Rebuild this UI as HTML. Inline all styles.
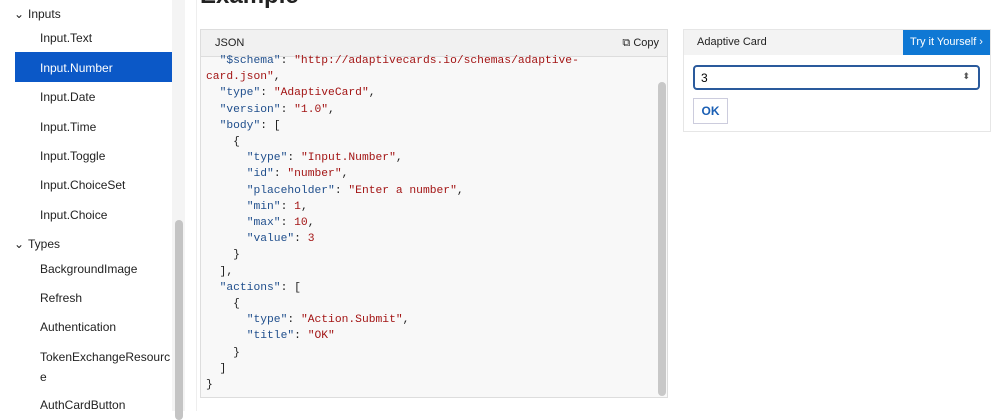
<!DOCTYPE html><html><head><style>
body{margin:0;width:1000px;height:411px;overflow:hidden;background:#fff;font-family:"Liberation Sans",sans-serif;position:relative}
.a{position:absolute}
.nav{font-size:12px;color:#222}
.nav div{position:absolute;left:40px}
pre{margin:0;font-family:"Liberation Mono",monospace;font-size:11.3px;line-height:16.2px;color:#222}
.k{color:#1f4e8c}.s{color:#a31515}
</style></head><body>
<div class="a" style="left:172px;top:0;width:13px;height:411px;background:#f4f4f4"></div>
<div class="a" style="left:175px;top:220px;width:8px;height:200px;background:#c4c4c4;border-radius:4px"></div>
<div class="a" style="left:196px;top:0;width:1px;height:411px;background:#eee"></div>
<div class="nav">
<div style="left:14px;top:7px">⌄</div>
<div style="left:28px;top:7px">Inputs</div>
<div style="top:31px">Input.Text</div>
<div class="a" style="left:15px;top:52px;width:157px;height:30px;background:#0b58c7"></div>
<div style="top:61px;color:#fff">Input.Number</div>
<div style="top:90px">Input.Date</div>
<div style="top:120px">Input.Time</div>
<div style="top:149px">Input.Toggle</div>
<div style="top:178px">Input.ChoiceSet</div>
<div style="top:208px">Input.Choice</div>
<div style="left:14px;top:237px">⌄</div>
<div style="left:28px;top:237px">Types</div>
<div style="top:262px">BackgroundImage</div>
<div style="top:291px">Refresh</div>
<div style="top:320px">Authentication</div>
<div style="top:350px">TokenExchangeResourc</div>
<div style="top:370px">e</div>
<div style="top:398px">AuthCardButton</div>
</div>
<div class="a" style="left:200px;top:-18px;font-size:24px;font-weight:bold;color:#222">Example</div>
<div class="a" style="left:200px;top:29px;width:468px;height:369px;border:1px solid #ddd;background:#f8f8f8;box-sizing:border-box">
<div style="height:26px;background:#f1f1f1;border-bottom:1px solid #ddd;position:relative;font-size:11px;color:#222">
<span style="position:absolute;left:14px;top:7px">JSON</span>
<span style="position:absolute;right:8px;top:7px">⧉ Copy</span></div>
<div class="a" style="left:457px;top:52px;width:8px;height:314px;background:#c8c8c8;border-radius:4px"></div>
<pre class="a" style="left:5px;top:23px">  <span class="k">"$schema"</span>: <span class="s">"http://adaptivecards.io/schemas/adaptive-</span>
<span class="s">card.json"</span>,
  <span class="k">"type"</span>: <span class="s">"AdaptiveCard"</span>,
  <span class="k">"version"</span>: <span class="s">"1.0"</span>,
  <span class="k">"body"</span>: [
    {
      <span class="k">"type"</span>: <span class="s">"Input.Number"</span>,
      <span class="k">"id"</span>: <span class="s">"number"</span>,
      <span class="k">"placeholder"</span>: <span class="s">"Enter a number"</span>,
      <span class="k">"min"</span>: <span class="s">1</span>,
      <span class="k">"max"</span>: <span class="s">10</span>,
      <span class="k">"value"</span>: <span class="s">3</span>
    }
  ],
  <span class="k">"actions"</span>: [
    {
      <span class="k">"type"</span>: <span class="s">"Action.Submit"</span>,
      <span class="k">"title"</span>: <span class="s">"OK"</span>
    }
  ]
}</pre>
</div>
<div class="a" style="left:683px;top:29px;width:308px;height:103px;border:1px solid #e6e6e6;box-sizing:border-box">
<div style="height:25px;background:#f3f3f3;position:relative;font-size:11px;color:#222">
<span style="position:absolute;left:13px;top:6px">Adaptive Card</span>
<span style="position:absolute;right:0;top:0;width:87px;height:25px;background:#0f78d4;color:#fff;line-height:25px;text-align:center">Try it Yourself ›</span></div>
<div class="a" style="left:9px;top:35px;width:287px;height:25px;border:2px solid #2a5a9c;border-radius:4px;box-sizing:border-box;font-size:12px;padding:4px 6px">3<span style="position:absolute;right:8px;top:4px;font-size:9px;color:#555">⬍</span></div>
<div class="a" style="left:9px;top:68px;width:35px;height:26px;border:1px solid #ccd;box-sizing:border-box;color:#1a5fb4;font-weight:bold;font-size:12px;text-align:center;line-height:24px">OK</div>
</div>
</body></html>
